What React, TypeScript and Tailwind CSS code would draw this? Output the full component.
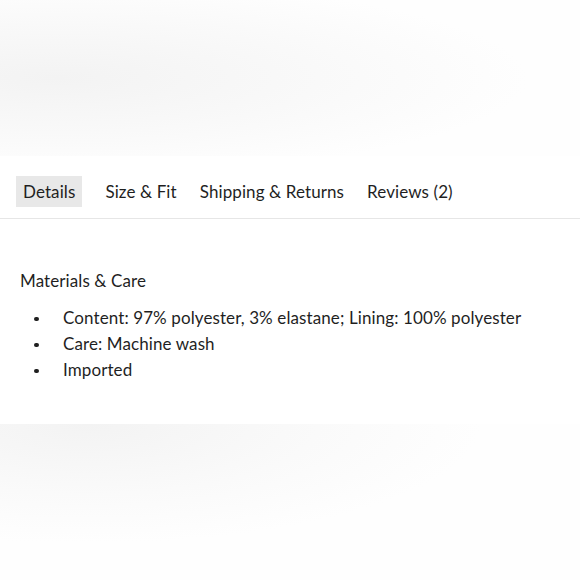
import React from 'react';

const tabs = ['Details', 'Size & Fit', 'Shipping & Returns', 'Reviews (2)'];

const items = [
  'Content: 97% polyester, 3% elastane; Lining: 100% polyester',
  'Care: Machine wash',
  'Imported',
];

const App: React.FC = () => {
  return (
    <div className="w-[580px] h-[580px] overflow-hidden bg-white text-[#1f1f1f] font-['Lato','Inter',sans-serif] tracking-[0.1px]">
      <div className="h-[156px] bg-[radial-gradient(ellipse_90%_70%_at_10%_50%,#f3f3f3,#f9f9f9_50%,#fefefe_90%)]" />

      <div className="bg-white h-[268px]">
        <div className="flex items-center gap-[23px] px-4 pt-5 pb-[11px] border-b border-[#e6e6e6]">
          {tabs.map((tab, i) => (
            <button
              key={tab}
              className={`h-[31px] text-[17px] leading-none ${i === 0 ? 'bg-[#e8e8e8] px-[7px]' : 'px-0'}`}
            >
              {tab}
            </button>
          ))}
        </div>

        <div className="px-5 pt-[50px]">
          <h3 className="text-[17px] leading-6">Materials &amp; Care</h3>
          <ul className="mt-3">
            {items.map((item) => (
              <li key={item} className="flex items-center text-[17px] leading-[26px] pl-[14px]">
                <span className="w-[4.5px] h-[4.5px] rounded-full bg-[#1f1f1f] mr-[24.5px] mt-[2px]" />
                {item}
              </li>
            ))}
          </ul>
        </div>
      </div>

      <div className="h-[156px] bg-[radial-gradient(ellipse_80%_90%_at_15%_0%,#f3f3f3,#fafafa_50%,#fefefe_85%)]" />
    </div>
  );
};

export default App;
